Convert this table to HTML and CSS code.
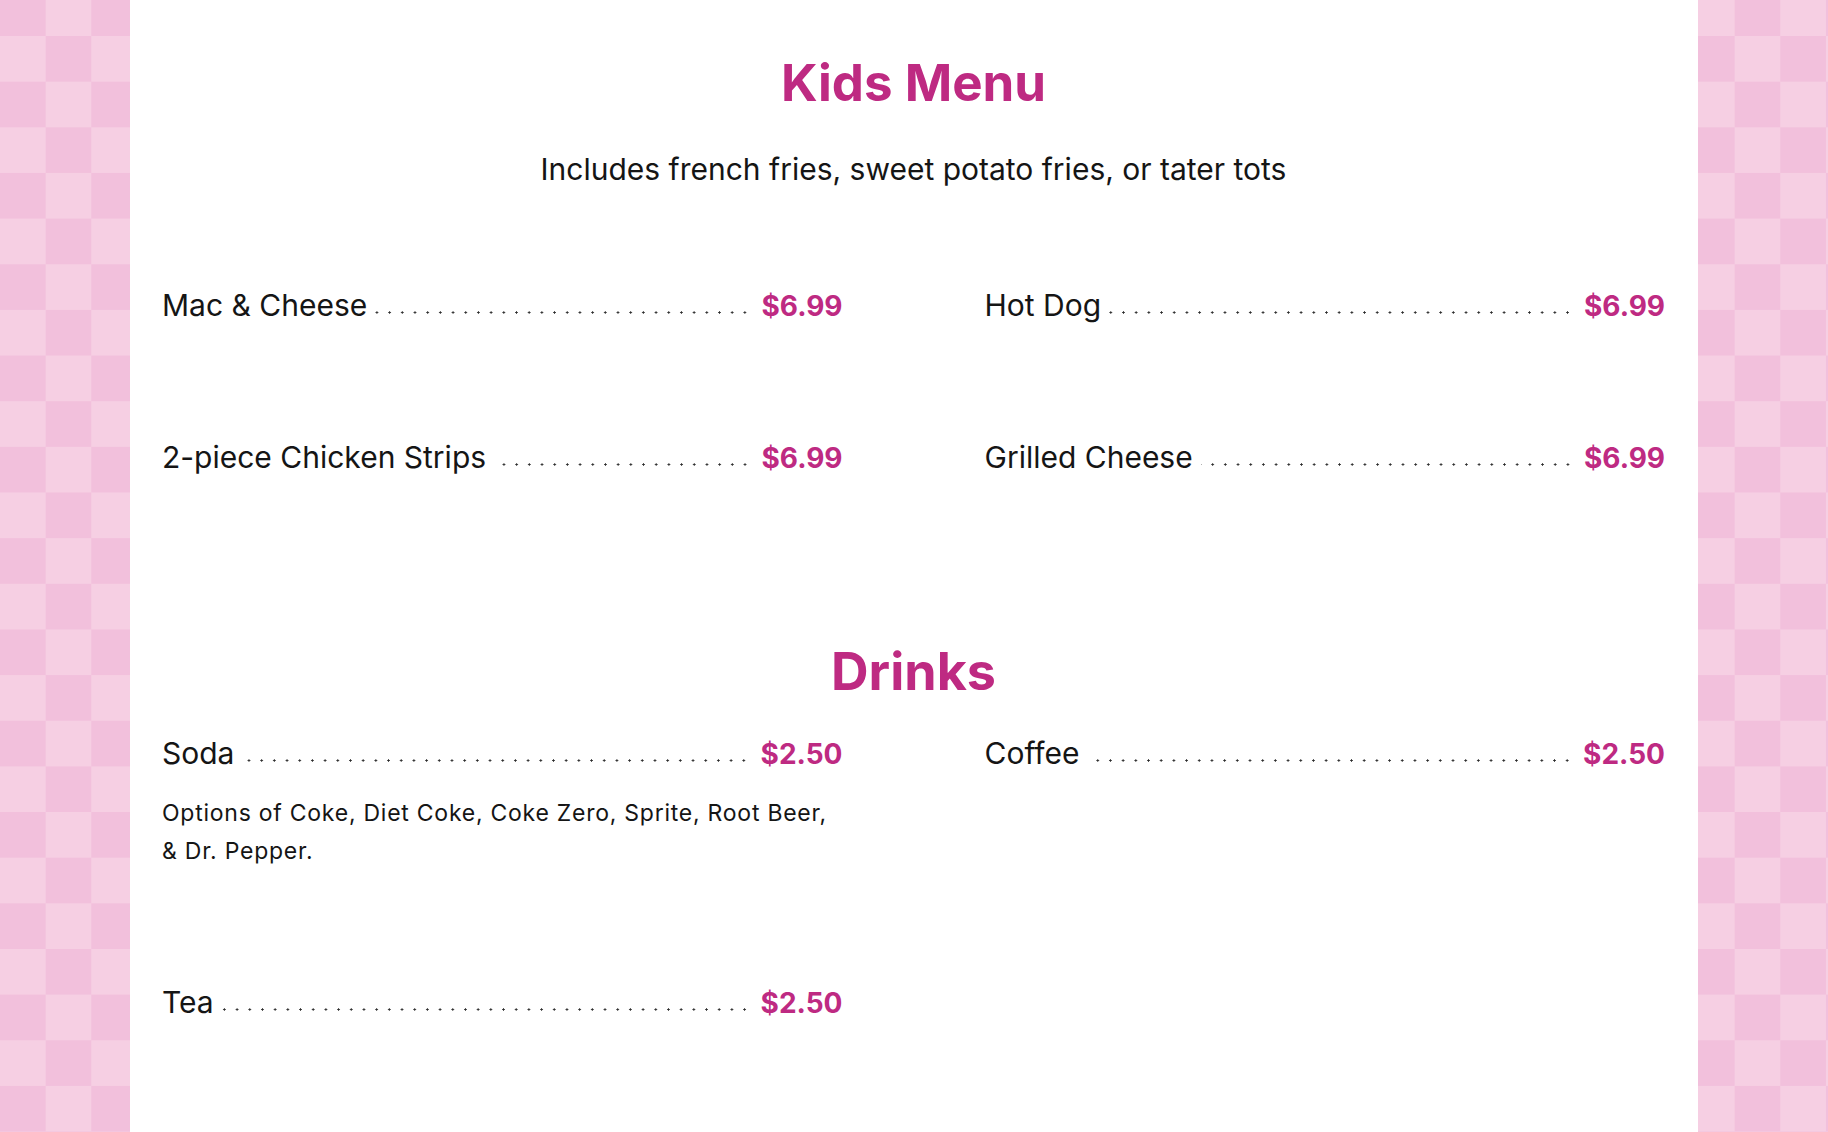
FILE: index.html
```html
<!DOCTYPE html>
<html lang="en">
<head>
<meta charset="utf-8">
<title>Kids Menu</title>
<link rel="stylesheet" href="styles.css">
</head>
<body>
<main class="panel">
  <h1 class="title">Kids Menu</h1>
  <p class="subtitle">Includes french fries, sweet potato fries, or tater tots</p>
  <div class="items kids">
    <div class="item"><div class="row"><span class="name">Mac &amp; Cheese</span><span class="leader"></span><span class="price">$6.99</span></div></div>
    <div class="item"><div class="row"><span class="name">Hot Dog</span><span class="leader"></span><span class="price">$6.99</span></div></div>
    <div class="item"><div class="row"><span class="name">2-piece Chicken Strips</span><span class="leader"></span><span class="price">$6.99</span></div></div>
    <div class="item"><div class="row"><span class="name">Grilled Cheese</span><span class="leader"></span><span class="price">$6.99</span></div></div>
  </div>
  <h2 class="title drinks-title">Drinks</h2>
  <div class="items drinks">
    <div class="item"><div class="row"><span class="name">Soda</span><span class="leader"></span><span class="price">$2.50</span></div>
      <p class="desc">Options of Coke, Diet Coke, Coke Zero, Sprite, Root Beer, &amp; Dr. Pepper.</p></div>
    <div class="item"><div class="row"><span class="name">Coffee</span><span class="leader"></span><span class="price">$2.50</span></div></div>
    <div class="item"><div class="row"><span class="name">Tea</span><span class="leader"></span><span class="price">$2.50</span></div></div>
  </div>
</main>
</body>
</html>
```
FILE: styles.css
```css
html, body {
  margin: 0;
  padding: 0;
}
body {
  min-height: 100vh;
  font-family: Inter, "Noto Sans", sans-serif;
  color: #151515;
  background-color: #f4c8e0;
  background-image: repeating-conic-gradient(#f6cfe3 0 25%, #f2c0dc 0 50%);
  background-size: 91.3px 91.3px;
  background-position: 0 -9.65px;
}
.panel {
  width: 1568px;
  min-height: 1132px;
  margin: 0 auto;
  box-sizing: border-box;
  background: #ffffff;
  padding: 53px 33px 40px 32px;
}
.title {
  margin: 0;
  text-align: center;
  color: #be2a82;
  font-weight: 700;
  font-size: 51px;
  line-height: 60px;
}
.subtitle {
  margin: 36px 0 0;
  text-align: center;
  font-size: 30px;
  line-height: 40px;
}
.items {
  display: grid;
  grid-template-columns: 1fr 1fr;
  column-gap: 142px;
  row-gap: 112px;
}
.kids {
  margin-top: 96px;
}
.drinks-title {
  margin-top: 165px;
  font-size: 52px;
}
.drinks {
  margin-top: 31px;
}
.row {
  display: flex;
  align-items: baseline;
  font-size: 30px;
  line-height: 40px;
}
.name {
  white-space: nowrap;
}
.leader {
  flex: 1;
  height: 3px;
  margin-left: 8px;
  margin-right: 10px;
  position: relative;
  top: -2px;
  background-image: radial-gradient(circle, #2a2a2a 0.9px, transparent 1.4px);
  background-size: 12.7px 3px;
  background-position: right bottom;
  background-repeat: repeat-x;
}
.price {
  color: #be2a82;
  font-weight: 700;
  font-size: 28px;
  line-height: 1;
}
.desc {
  margin: 21px 0 0;
  font-size: 23px;
  letter-spacing: 0.75px;
  line-height: 38px;
}
```
